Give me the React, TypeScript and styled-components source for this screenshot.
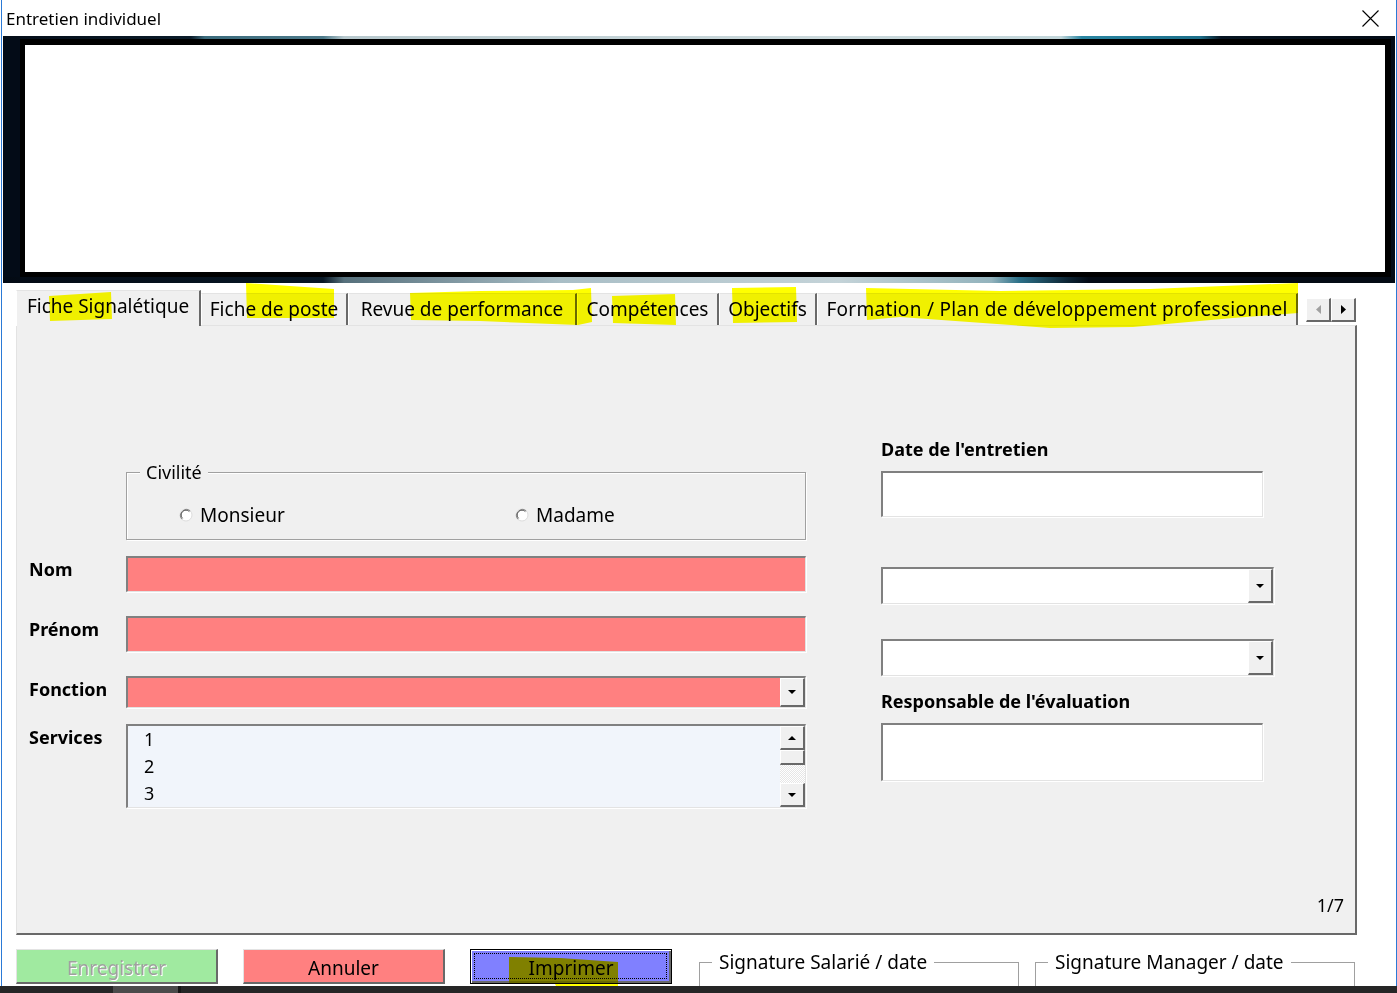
import React from 'react';
import styled, { createGlobalStyle } from 'styled-components';

const FONT = `"Noto Sans", "Open Sans", "Liberation Sans", sans-serif`;

const GlobalStyle = createGlobalStyle`
  html, body {
    margin: 0;
    padding: 0;
    background: #fff;
  }
  body {
    font-family: ${FONT};
    color: #000;
    overflow: hidden;
  }
  * {
    box-sizing: border-box;
  }
`;

const Window = styled.div`
  position: relative;
  width: 1397px;
  height: 993px;
  padding: 0 1px 0 2px;
  display: flex;
  flex-direction: column;
  overflow: hidden;
  background: #fff;
  box-shadow: inset 1px 0 0 #fff, inset 2px 0 0 #2b7ad6, inset -1px 0 0 #2b7ad6;
`;

const TitleBar = styled.div`
  height: 36px;
  flex-shrink: 0;
  display: flex;
  align-items: center;
  justify-content: space-between;
  padding: 0 17px 0 4px;
  font-size: 17px;
`;

const Banner = styled.div`
  height: 247px;
  flex-shrink: 0;
  margin: 0 1px;
  display: flex;
  padding: 3px 4px 6px 17px;
  background:
    linear-gradient(
        to right,
        #040d18 0%,
        #0b1c2a 13.5%,
        #3b6b7c 14.5%,
        #4d7a8a 23%,
        #b7c8cd 24.5%,
        #cbd9dc 60%,
        #c2d6da 76%,
        #2a86a2 77.5%,
        #1d6f8a 86%,
        #061522 87.5%,
        #030b16 100%
      )
      top / 100% 4px no-repeat,
    linear-gradient(
        to right,
        #030a14 0%,
        #071725 23%,
        #56707c 24.5%,
        #a9bec6 40%,
        #c4d3d8 60%,
        #93b3bd 71%,
        #2c7088 73%,
        #0c2433 76.5%,
        #030a14 78%,
        #030a14 100%
      )
      bottom / 100% 6px no-repeat,
    #030b17;
`;

const BannerFrame = styled.div`
  flex: 1;
  background: #fff;
  border: solid #000;
  border-width: 6px 6px 5px 5px;
`;

const Body = styled.div`
  height: 652px;
  flex-shrink: 0;
  padding: 7px 0 0 14px;
  display: flex;
  flex-direction: column;
`;

const TabRow = styled.div`
  position: relative;
  z-index: 1;
  height: 35px;
  display: flex;
  align-items: flex-end;
`;

const Tab = styled.div<{ $active?: boolean; $w: number }>`
  width: ${p => p.$w}px;
  height: ${p => (p.$active ? 36 : 32)}px;
  margin-bottom: ${p => (p.$active ? -1 : 0)}px;
  padding-top: 2px;
  background: #f0f0f0;
  border-top: 1px solid #e3e3e3;
  border-left: 1px solid #fff;
  border-right: 2px solid #696969;
  font-size: 19px;
  line-height: 26px;
  letter-spacing: ${p => (p.$w > 400 ? '0.3px' : '0')};
  text-align: center;
  white-space: nowrap;
`;

const TabScroller = styled.div`
  align-self: flex-start;
  margin: 8px 0 0 8px;
  display: flex;
`;

const RaisedButton = styled.div`
  width: 25px;
  height: 24px;
  display: flex;
  align-items: center;
  justify-content: center;
  background: #f0f0f0;
  border-style: solid;
  border-width: 1px 2px 2px 1px;
  border-color: #fff #696969 #696969 #fff;
`;

const Page = styled.div`
  width: 1341px;
  height: 610px;
  display: flex;
  flex-direction: column;
  padding-left: 12px;
  background: #f0f0f0;
  border-style: solid;
  border-width: 1px 2px 2px 1px;
  border-color: #e3e3e3 #696969 #696969 #e3e3e3;
`;

const PageGrid = styled.div`
  display: grid;
  grid-template-columns: 777px 393px;
  column-gap: 75px;
  align-items: start;
`;

const Column = styled.div<{ $offset: number }>`
  margin-top: ${p => p.$offset}px;
  display: flex;
  flex-direction: column;
  align-items: flex-start;
`;

const Frame = styled.fieldset`
  margin: 0 0 0 97px;
  width: 680px;
  padding: 19px 0 12px 0;
  border: 1px solid #a0a0a0;
  box-shadow: inset 1px 1px 0 #fff, 1px 1px 0 #fff;
`;

const FrameLegend = styled.legend`
  position: relative;
  margin-left: 13px;
  padding: 0 6px;
  font-size: 18px;
  line-height: 24px;
  background: #f0f0f0;
`;

const RadioRow = styled.div`
  display: grid;
  grid-template-columns: 336px auto;
  padding-left: 52px;
`;

const RadioOption = styled.label`
  display: flex;
  align-items: center;
  gap: 7px;
  font-size: 19px;
  line-height: 24px;
`;

const FieldRow = styled.div<{ $gap: number }>`
  margin-top: ${p => p.$gap}px;
  display: grid;
  grid-template-columns: 97px 680px;
  align-items: start;
`;

const FieldLabel = styled.div`
  padding-top: 1px;
  font-size: 18px;
  line-height: 24px;
  font-weight: 700;
  white-space: nowrap;
`;

const SideLabel = styled(FieldLabel)<{ $gap: number }>`
  margin-top: ${p => p.$gap}px;
  padding-top: 0;
`;

const TextBox = styled.div<{ $h: number; $w?: number; $bg?: string; $gap?: number }>`
  width: ${p => (p.$w ? `${p.$w}px` : '100%')};
  height: ${p => p.$h}px;
  margin-top: ${p => p.$gap ?? 0}px;
  display: flex;
  justify-content: flex-end;
  background: ${p => p.$bg ?? '#fff'};
  border-style: solid;
  border-width: 2px 1px 1px 2px;
  border-color: #808080 #e3e3e3 #e3e3e3 #808080;
  box-shadow: 1px 1px 0 #fff;
`;

const DropButton = styled(RaisedButton)`
  width: 25px;
  height: 100%;
`;

const ListBox = styled(TextBox)`
  justify-content: space-between;
`;

const ListItems = styled.div`
  padding-left: 16px;
  font-size: 18px;
  line-height: 27px;
`;

const ScrollBar = styled.div`
  width: 25px;
  display: flex;
  flex-direction: column;
`;

const ScrollArrow = styled(RaisedButton)`
  height: 24px;
`;

const ScrollThumb = styled(RaisedButton)`
  height: 15px;
`;

const ScrollTrack = styled.div`
  flex: 1;
  background: repeating-conic-gradient(#fff 0 25%, #e6e6e6 0 50%) 0 0 / 2px 2px;
`;

const PageNumber = styled.div`
  margin-top: auto;
  align-self: flex-end;
  padding: 0 11px 16px 0;
  font-size: 18px;
  line-height: 24px;
`;

const Footer = styled.div`
  height: 51px;
  flex-shrink: 0;
  padding: 14px 0 0 14px;
  display: flex;
  align-items: flex-start;
  overflow: hidden;
`;

const ActionButton = styled.div<{ $bg: string; $disabled?: boolean; $focused?: boolean }>`
  position: relative;
  width: 202px;
  height: 35px;
  margin-right: 25px;
  padding-top: 3px;
  text-align: center;
  font-size: 19px;
  line-height: 30px;
  background: ${p => p.$bg};
  color: ${p => (p.$disabled ? '#a0a0a0' : '#000')};
  text-shadow: ${p => (p.$disabled ? '1px 1px 0 #fff' : 'none')};
  border-style: solid;
  border-width: ${p => (p.$focused ? '1px' : '1px 2px 2px 1px')};
  border-color: ${p => (p.$focused ? '#000' : '#e3e3e3 #696969 #696969 #e3e3e3')};
  box-shadow: ${p => (p.$focused ? 'inset 1px 1px 0 #fff, inset -2px -2px 0 #696969' : 'none')};

  &::after {
    content: '';
    display: ${p => (p.$focused ? 'block' : 'none')};
    position: absolute;
    inset: 3px 4px 4px 3px;
    border: 1px dotted #000;
  }
`;

const SignatureFrame = styled.fieldset<{ $gap: number }>`
  margin: 0 0 0 ${p => p.$gap}px;
  width: 320px;
  height: 60px;
  padding: 0;
  border: 1px solid #a0a0a0;
`;

const SignatureLegend = styled.legend`
  margin-left: 12px;
  padding: 0 7px;
  font-size: 19px;
  line-height: 26px;
`;

const Taskbar = styled.div`
  height: 7px;
  flex-shrink: 0;
  margin: 0 -1px 0 -2px;
  background: linear-gradient(
    to right,
    #262626 0 113px,
    #4b4b4b 113px 178px,
    #161616 178px 181px,
    #262626 181px
  );
`;

const Annotations = styled.svg`
  position: absolute;
  top: 0;
  left: 0;
  pointer-events: none;
  mix-blend-mode: multiply;
  z-index: 5;
`;

const CloseIcon = () => (
  <svg width="17" height="17" viewBox="0 0 17 17">
    <path d="M0.5 0.5 L16.5 16.5 M16.5 0.5 L0.5 16.5" stroke="#000" strokeWidth="1.1" fill="none" />
  </svg>
);

const Arrow = ({ dir, color = '#000' }: { dir: 'up' | 'down' | 'left' | 'right'; color?: string }) => {
  const pts = {
    down: '0,0 8,0 4,4',
    up: '0,4 8,4 4,0',
    left: '5,0 5,9 0,4.5',
    right: '0,0 0,9 5,4.5',
  }[dir];
  const vertical = dir === 'up' || dir === 'down';
  return (
    <svg width={vertical ? 8 : 5} height={vertical ? 4 : 9} viewBox={vertical ? '0 0 8 4' : '0 0 5 9'}>
      <polygon points={pts} fill={color} />
    </svg>
  );
};

const RadioCircle = () => (
  <svg width="14" height="14" viewBox="0 0 14 14">
    <circle cx="7" cy="7" r="6" fill="#fff" stroke="#dcdcdc" />
    <path d="M2.8 11.2 A6 6 0 0 1 11.2 2.8" stroke="#8a8a8a" fill="none" />
    <path d="M3.6 10.4 A4.8 4.8 0 0 1 10.4 3.6" stroke="#5e5e5e" fill="none" />
  </svg>
);

const tabs = [
  { label: 'Fiche Signalétique', w: 185 },
  { label: 'Fiche de poste', w: 147 },
  { label: 'Revue de performance', w: 229 },
  { label: 'Compétences', w: 142 },
  { label: 'Objectifs', w: 98 },
  { label: 'Formation / Plan de développement professionnel', w: 481 },
];

const highlights = [
  '49,296 111,292 112,319 50,321',
  '246,283 290,286 334,289 334,318 247,318',
  '410,293 480,291 573,290 591,288 592,322 578,325 480,321 411,320',
  '612,296 675,294 676,325 613,323',
  '732,288 796,287 797,322 733,323',
  '866,288 1000,291 1150,289 1298,283 1298,313 1233,318 1133,327 1050,328 983,323 900,317 867,320',
  '509,957 560,958 618,962 618,986 556,986 555,984 509,984',
];

const Combo = ({ w, h, bg, gap }: { w?: number; h: number; bg?: string; gap?: number }) => (
  <TextBox $w={w} $h={h} $bg={bg} $gap={gap}>
    <DropButton>
      <Arrow dir="down" />
    </DropButton>
  </TextBox>
);

const App: React.FC = () => {
  return (
    <>
      <GlobalStyle />
      <Window>
        <TitleBar>
          <span>Entretien individuel</span>
          <CloseIcon />
        </TitleBar>

        <Banner>
          <BannerFrame />
        </Banner>

        <Body>
          <TabRow>
            {tabs.map((t, i) => (
              <Tab key={t.label} $w={t.w} $active={i === 0}>
                {t.label}
              </Tab>
            ))}
            <TabScroller>
              <RaisedButton>
                <Arrow dir="left" color="#a0a0a0" />
              </RaisedButton>
              <RaisedButton>
                <Arrow dir="right" />
              </RaisedButton>
            </TabScroller>
          </TabRow>

          <Page>
            <PageGrid>
              <Column $offset={134}>
                <Frame>
                  <FrameLegend>Civilité</FrameLegend>
                  <RadioRow>
                    <RadioOption>
                      <RadioCircle />
                      Monsieur
                    </RadioOption>
                    <RadioOption>
                      <RadioCircle />
                      Madame
                    </RadioOption>
                  </RadioRow>
                </Frame>

                <FieldRow $gap={16}>
                  <FieldLabel>Nom</FieldLabel>
                  <TextBox $h={36} $bg="#ff8080" />
                </FieldRow>
                <FieldRow $gap={24}>
                  <FieldLabel>Prénom</FieldLabel>
                  <TextBox $h={36} $bg="#ff8080" />
                </FieldRow>
                <FieldRow $gap={24}>
                  <FieldLabel>Fonction</FieldLabel>
                  <Combo h={32} bg="#ff8080" />
                </FieldRow>
                <FieldRow $gap={16}>
                  <FieldLabel>Services</FieldLabel>
                  <ListBox $h={84} $bg="#f1f5fb">
                    <ListItems>
                      <div>1</div>
                      <div>2</div>
                      <div>3</div>
                    </ListItems>
                    <ScrollBar>
                      <ScrollArrow>
                        <Arrow dir="up" />
                      </ScrollArrow>
                      <ScrollThumb />
                      <ScrollTrack />
                      <ScrollArrow>
                        <Arrow dir="down" />
                      </ScrollArrow>
                    </ScrollBar>
                  </ListBox>
                </FieldRow>
              </Column>

              <Column $offset={111}>
                <SideLabel $gap={0}>Date de l'entretien</SideLabel>
                <TextBox $w={382} $h={46} $gap={10} />
                <Combo w={393} h={37} gap={50} />
                <Combo w={393} h={37} gap={35} />
                <SideLabel $gap={13}>Responsable de l'évaluation</SideLabel>
                <TextBox $w={382} $h={58} $gap={10} />
              </Column>
            </PageGrid>
            <PageNumber>1/7</PageNumber>
          </Page>
        </Body>

        <Footer>
          <ActionButton $bg="#a0eaa0" $disabled>
            Enregistrer
          </ActionButton>
          <ActionButton $bg="#ff8080">Annuler</ActionButton>
          <ActionButton $bg="#8080ff" $focused>
            Imprimer
          </ActionButton>
          <SignatureFrame $gap={2}>
            <SignatureLegend>Signature Salarié / date</SignatureLegend>
          </SignatureFrame>
          <SignatureFrame $gap={16}>
            <SignatureLegend>Signature Manager / date</SignatureLegend>
          </SignatureFrame>
        </Footer>

        <Taskbar />

        <Annotations width="1397" height="993" viewBox="0 0 1397 993">
          {highlights.map(p => (
            <polygon key={p} points={p} fill="#ffff00" />
          ))}
        </Annotations>
      </Window>
    </>
  );
};

export default App;
